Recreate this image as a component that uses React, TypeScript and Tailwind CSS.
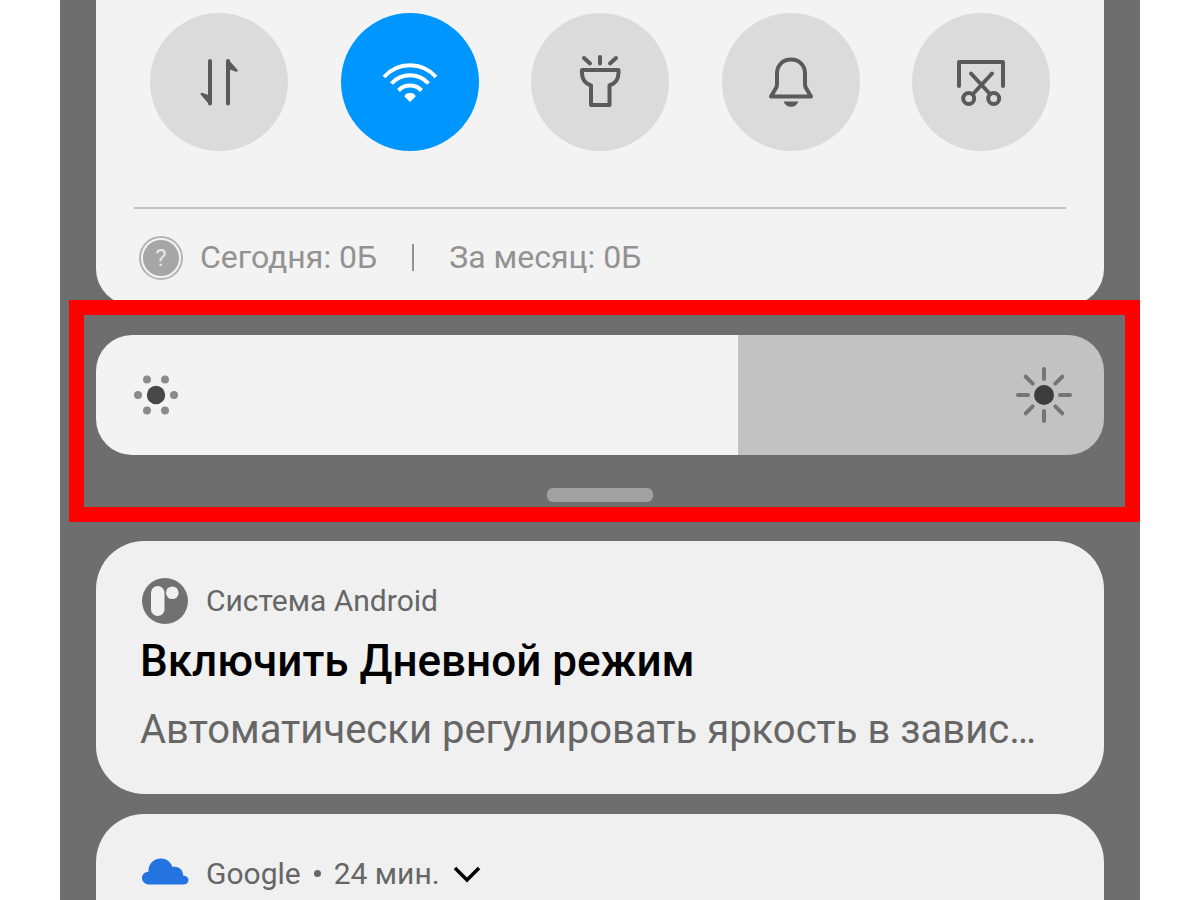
import { useState } from "react";
import type { ReactNode } from "react";

function Icon({ children }: { children: ReactNode }) {
  return (
    <svg
      viewBox="0 0 60 60"
      className="size-[60px]"
      fill="none"
      stroke="currentColor"
      strokeWidth="4"
      strokeLinecap="round"
      strokeLinejoin="round"
      aria-hidden="true"
    >
      {children}
    </svg>
  );
}

const toggles = [
  {
    label: "Мобильные данные",
    on: false,
    icon: (
      <Icon>
        <path d="M21 9v42.5" />
        <path d="M39 9v42.5" />
        <path d="M21 51.5 12.800 42 21 45Z" fill="currentColor" strokeWidth="2.5" />
        <path d="M39 9 47.500 18.500 39 15.500Z" fill="currentColor" strokeWidth="2.5" />
      </Icon>
    ),
  },
  {
    label: "Wi-Fi",
    on: true,
    icon: (
      <Icon>
        <g strokeLinecap="butt">
          <path d="M4 25A34.500 34.500 0 0 1 56 25" />
          <path d="M11.500 31.500A25 25 0 0 1 48.500 31.500" />
          <path d="M18.500 38.500A16 16 0 0 1 41.500 38.500" />
        </g>
        <path d="M30 50 24.500 44.500C24.500 42.500 27 41 30 41s5.500 1.500 5.500 3.500Z" fill="currentColor" stroke="none" />
      </Icon>
    ),
  },
  {
    label: "Фонарик",
    on: false,
    icon: (
      <Icon>
        <path d="M14 6l6 5.500M30 5v6.500M46 6l-6 5.500" />
        <path d="M12 18h36.500v3c0 6-3.500 10.500-9 12.500V53h-18.500V33.500c-5.500-2-9-6.500-9-12.500Z" />
      </Icon>
    ),
  },
  {
    label: "Звук",
    on: false,
    icon: (
      <Icon>
        <path d="M10 44.500h40L45 36c-.7-1.300-1-2.500-1-4V21.500C44 13 38 7.500 30 7.500S16 13 16 21.500V32c0 1.500-.3 2.700-1 4Z" />
        <path d="M22.500 49.500h15C36 53 33.500 54.700 30 54.700S24 53 22.500 49.500Z" fill="currentColor" stroke="none" />
      </Icon>
    ),
  },
  {
    label: "Снимок экрана",
    on: false,
    icon: (
      <Icon>
        <path d="M8 34V10h44v24" />
        <path d="M20 21.500 39 42M41 21.500 22 42" />
        <circle cx="17.700" cy="46.500" r="5.500" />
        <circle cx="42.700" cy="46.500" r="5.500" />
      </Icon>
    ),
  },
];

function QuickSettings() {
  return (
    <section className="rounded-b-[36px] bg-[#f3f3f3] px-[38px] pt-[13px] pb-[25px]">
      <div className="flex justify-between px-4">
        {toggles.map((t) => (
          <button
            key={t.label}
            type="button"
            aria-label={t.label}
            aria-pressed={t.on}
            className={
              t.on
                ? "flex size-[138px] items-center justify-center rounded-full bg-[#0096ff] text-white"
                : "flex size-[138px] items-center justify-center rounded-full bg-[#dbdbdb] text-[#5a5a5a]"
            }
          >
            {t.icon}
          </button>
        ))}
      </div>
      <div className="mt-14 h-[2px] bg-[#c3c3c3]" />
      <div className="mt-[26px] flex items-center pl-[5px] text-[32px] leading-[45px] text-[#929292]">
        <span className="flex size-11 items-center justify-center rounded-full border-2 border-[#b4b4b4] p-[2px]">
          <span className="flex size-9 items-center justify-center rounded-full bg-[#a6a6a6] text-2xl text-[#e6e6e6]">?</span>
        </span>
        <span className="ml-[17px]">Сегодня: 0Б</span>
        <span className="ml-[35px] h-[27px] w-[2px] bg-[#929292]" />
        <span className="ml-[35px]">За месяц: 0Б</span>
      </div>
    </section>
  );
}

function Brightness() {
  const [level, setLevel] = useState(637);
  const stop = level / 10 + "%";
  return (
    <section className="relative mt-[30px]">
      <div className="relative">
        <input
          type="range"
          aria-label="Яркость"
          min={0}
          max={1000}
          value={level}
          onChange={(e) => setLevel(Number(e.target.value))}
          className="block h-[120px] w-full cursor-pointer appearance-none rounded-[36px] [&::-webkit-slider-thumb]:size-0 [&::-webkit-slider-thumb]:appearance-none"
          style={{ background: `linear-gradient(to right, #f3f3f3 ${stop}, #c2c2c2 ${stop})` }}
        />
        <div className="pointer-events-none absolute inset-0 flex items-center justify-between px-8">
          <svg viewBox="-28 -28 56 56" className="size-14" fill="#8b8b8b" aria-hidden="true">
            <circle r="9.200" fill="#484848" />
            <circle cx="-18" cy="0" r="4" />
            <circle cx="18" cy="0" r="4" />
            <circle cx="-9" cy="-15.600" r="4" />
            <circle cx="9" cy="-15.600" r="4" />
            <circle cx="-9" cy="15.600" r="4" />
            <circle cx="9" cy="15.600" r="4" />
          </svg>
          <svg viewBox="-28 -28 56 56" className="size-14" stroke="#757575" strokeWidth="4" strokeLinecap="round" aria-hidden="true">
            <circle r="10" fill="#3d3d3d" stroke="none" />
            <path d="M0-26v10M0 16v10M-26 0h10M16 0h10M-18.300-18.300l7 7M11.300 11.300l7 7M-18.300 18.300l7-7M11.300-11.300l7-7" />
          </svg>
        </div>
      </div>
      <div className="mx-auto mt-[33px] h-[14px] w-[106px] rounded-md bg-[#a1a1a1]" />
      <div className="pointer-events-none absolute -top-[35px] -right-9 -bottom-5 -left-[27px] border-[15px] border-[#ff0000]" />
    </section>
  );
}

function Notifications() {
  return (
    <>
      <article className="mt-[39px] rounded-[48px] bg-[#f0f0f0] px-11 pt-9 pb-9">
        <header className="flex items-center gap-[18px] pl-[2px] text-[30px] leading-[47px] text-[#666666]">
          <svg viewBox="0 0 46 46" className="size-[46px]" aria-hidden="true">
            <circle cx="23" cy="23" r="23" fill="#717171" />
            <rect x="9" y="8" width="13.500" height="30" rx="6.700" fill="#f0f0f0" />
            <circle cx="30.300" cy="14.700" r="6.300" fill="#f0f0f0" />
          </svg>
          <span>Система Android</span>
        </header>
        <h2 className="mt-[7px] text-[44px] leading-[60px] font-medium text-black">Включить Дневной режим</h2>
        <p className="mt-[11px] truncate text-[40px] leading-[56px] text-[#666666]">
          Автоматически регулировать яркость в завис…
        </p>
      </article>
      <article className="mt-5 flex-1 rounded-t-[48px] bg-[#f0f0f0] px-11 pt-9">
        <header className="flex items-center pl-[2px] text-[30px] leading-[47px] text-[#666666]">
          <svg viewBox="0 0 47 32" className="h-8 w-[47px]" fill="#2374e1" aria-hidden="true">
            <path d="M7 26.500C3 26.500 0 23.500 0 20c0-3.500 3-6.200 6.500-6.300C6 6 11.500.5 19 .5c5.500 0 9.500 3.200 11.500 8.500 6-1.500 10.500 2.500 10.700 8.500 3.300.2 5.300 2 5.300 4.500 0 2.700-2 4.500-5 4.500Z" />
          </svg>
          <span className="ml-[17px]">Google</span>
          <span className="ml-[13px] size-[7px] rounded-full bg-[#666666]" />
          <span className="ml-[13px]">24 мин.</span>
          <button type="button" aria-label="Развернуть" className="ml-[13px]">
            <svg viewBox="0 0 28 18" className="h-[18px] w-7" fill="none" stroke="#000" strokeWidth="3.500" aria-hidden="true">
              <path d="M2 3l12 12L26 3" />
            </svg>
          </button>
        </header>
      </article>
    </>
  );
}

export default function App() {
  return (
    <div className="min-h-screen bg-white px-[60px] font-['Roboto',sans-serif]">
      <main className="flex min-h-screen flex-col bg-[#6e6e6e] px-9">
        <QuickSettings />
        <Brightness />
        <Notifications />
      </main>
    </div>
  );
}
